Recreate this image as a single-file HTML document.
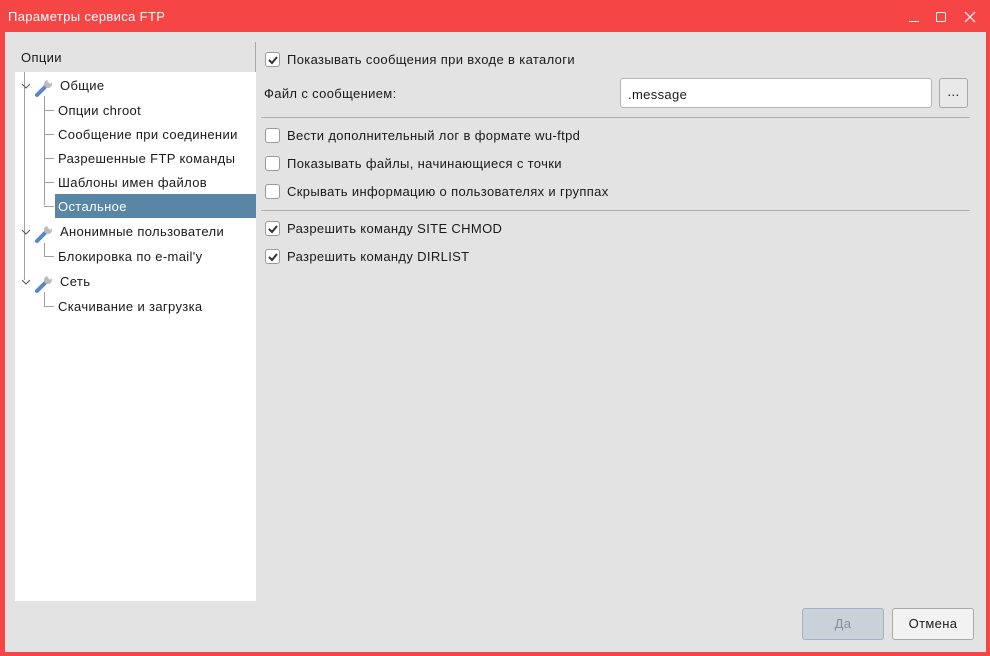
<!DOCTYPE html>
<html><head><meta charset="utf-8"><style>
*{margin:0;padding:0;box-sizing:border-box}
body{width:990px;height:656px;background:#f54545;font-family:"Liberation Sans","DejaVu Sans",sans-serif;font-size:13px;letter-spacing:0.35px;color:#1a1a1a;position:relative;overflow:hidden}
.title{position:absolute;left:8px;top:9px;color:#fff;font-size:13px}
.main{position:absolute;left:5px;top:32px;width:981px;height:620px;background:#e3e3e3}
.abs{position:absolute}
.tree{position:absolute;left:10px;top:40px;width:241px;height:529px;background:#fff}
.hdr{position:absolute;left:16px;top:18px}
.vline{position:absolute;left:250px;top:10px;width:1px;height:559px;background:#a8a8a8}
.it{position:absolute;white-space:nowrap}
.sel{position:absolute;left:50px;top:162px;width:201px;height:24px;background:#5a86a6}
.tl{position:absolute;background:#a0a0a0}
.cb{position:absolute;width:15px;height:15px;border:1px solid #9a9a9a;border-radius:3px;background:#fff}
.cb svg{position:absolute;left:1px;top:1px}
.sep{position:absolute;left:256px;width:709px;height:1px;background:#b0b0b0}
.inp{position:absolute;left:615px;top:46px;width:312px;height:30px;background:#fff;border:1px solid #b5b5b5;border-radius:3px;padding:8px 7px}
.btn{position:absolute;border:1px solid #a8a8a8;border-radius:3px;background:#e9e9e9;text-align:center}
</style></head><body>
<div class="title">Параметры сервиса FTP</div>
<svg class="abs" style="left:905px;top:8px" width="80" height="18">
<line x1="4" y1="13.5" x2="14" y2="13.5" stroke="#fff" stroke-width="1"/>
<rect x="31.5" y="4.5" width="9" height="9" rx="1" fill="none" stroke="#fff"/>
<path d="M60 4L70 14M70 4L60 14" stroke="#fff" stroke-width="1.2"/>
</svg>
<div class="main">
<div class="hdr">Опции</div>
<div class="vline"></div>
<div class="tree"></div>
<div class="sel"></div>
<div class="tl" style="left:19px;top:40px;width:1px;height:208px"></div>
<div class="tl" style="left:39px;top:64px;width:1px;height:109px"></div>
<div class="tl" style="left:39px;top:211px;width:1px;height:13px"></div>
<div class="tl" style="left:39px;top:260px;width:1px;height:14px"></div>
<div class="tl" style="left:39px;top:78px;width:10px;height:1px"></div>
<div class="tl" style="left:39px;top:102px;width:10px;height:1px"></div>
<div class="tl" style="left:39px;top:126px;width:10px;height:1px"></div>
<div class="tl" style="left:39px;top:150px;width:10px;height:1px"></div>
<div class="tl" style="left:39px;top:174px;width:10px;height:1px"></div>
<div class="tl" style="left:39px;top:224px;width:10px;height:1px"></div>
<div class="tl" style="left:39px;top:274px;width:10px;height:1px"></div>
<svg class="abs" style="left:14px;top:45px" width="260" height="220">
<g fill="none" stroke="#555" stroke-width="1"><path d="M3 7l4 4 4-4"/><path d="M3 153l4 4 4-4"/><path d="M3 203l4 4 4-4"/></g>
<g id="w"><path d="M18 18 L27 9" stroke="#5a86c6" stroke-width="4" stroke-linecap="round"/><circle cx="29" cy="7" r="4" fill="#bbb"/><rect x="29" y="1" width="4" height="5" fill="#fff" transform="rotate(45 31 4)"/></g>
<use href="#w" y="146"/><use href="#w" y="196"/>
</svg>
<div class="it" style="left:55px;top:46px">Общие</div>
<div class="it" style="left:53px;top:71px">Опции chroot</div>
<div class="it" style="left:53px;top:95px">Сообщение при соединении</div>
<div class="it" style="left:53px;top:119px">Разрешенные FTP команды</div>
<div class="it" style="left:53px;top:143px">Шаблоны имен файлов</div>
<div class="it" style="left:53px;top:167px;color:#fff">Остальное</div>
<div class="it" style="left:55px;top:192px">Анонимные пользователи</div>
<div class="it" style="left:53px;top:217px">Блокировка по e-mail'y</div>
<div class="it" style="left:55px;top:242px">Сеть</div>
<div class="it" style="left:53px;top:267px">Скачивание и загрузка</div>

<div class="cb" style="left:260px;top:20px"><svg width="12" height="12"><path d="M2 6l3 3 5-6" fill="none" stroke="#333" stroke-width="2"/></svg></div>
<div class="it" style="left:282px;top:20px">Показывать сообщения при входе в каталоги</div>
<div class="it" style="left:259px;top:54px">Файл с сообщением:</div>
<div class="inp">.message</div>
<div class="btn" style="left:934px;top:46px;width:29px;height:30px;line-height:26px">...</div>
<div class="sep" style="top:85px"></div>
<div class="cb" style="left:260px;top:96px"></div>
<div class="it" style="left:282px;top:96px">Вести дополнительный лог в формате wu-ftpd</div>
<div class="cb" style="left:260px;top:124px"></div>
<div class="it" style="left:282px;top:124px">Показывать файлы, начинающиеся с точки</div>
<div class="cb" style="left:260px;top:152px"></div>
<div class="it" style="left:282px;top:152px">Скрывать информацию о пользователях и группах</div>
<div class="sep" style="top:178px"></div>
<div class="cb" style="left:260px;top:189px"><svg width="12" height="12"><path d="M2 6l3 3 5-6" fill="none" stroke="#333" stroke-width="2"/></svg></div>
<div class="it" style="left:282px;top:189px">Разрешить команду SITE CHMOD</div>
<div class="cb" style="left:260px;top:217px"><svg width="12" height="12"><path d="M2 6l3 3 5-6" fill="none" stroke="#333" stroke-width="2"/></svg></div>
<div class="it" style="left:282px;top:217px">Разрешить команду DIRLIST</div>

<div class="btn" style="left:797px;top:576px;width:82px;height:32px;line-height:30px;background:#c9d1d9;border-color:#9fb3c5;color:#8a8f94">Да</div>
<div class="btn" style="left:887px;top:576px;width:82px;height:32px;line-height:30px;background:#f2f2f2">Отмена</div>
</div>
</body></html>
